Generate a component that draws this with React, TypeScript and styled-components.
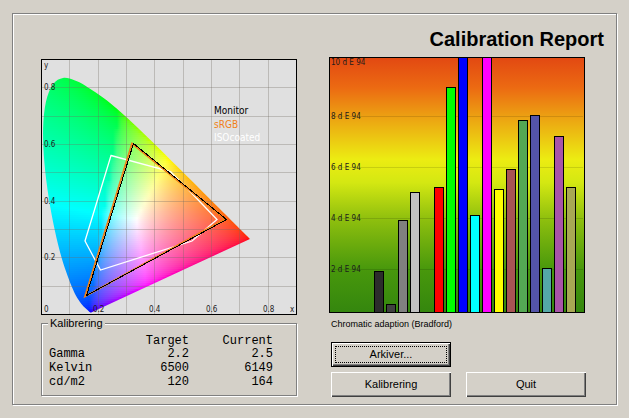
import React from "react";
import styled, { createGlobalStyle, css } from "styled-components";

const GlobalStyle = createGlobalStyle`
  * { box-sizing: border-box; }
  body {
    margin: 0;
    background: #d4d0c8;
    color: #000;
    font-family: "Liberation Sans", Arial, sans-serif;
    font-size: 11px;
  }
`;

const etched = css`
  border: 1px solid #808080;
  box-shadow: inset 1px 1px 0 #fff, 1px 1px 0 #fff;
`;

const Frame = styled.main`
  ${etched}
  margin: 13px 12px 12px;
  padding-bottom: 7px;
`;

const Title = styled.h1`
  margin: 0;
  padding: 13px 12px 6px;
  font-size: 20px;
  line-height: 24px;
  text-align: right;
`;

const Columns = styled.div`
  display: grid;
  grid-template-columns: minmax(0, 1fr) minmax(0, 1fr);
  align-items: start;
  gap: 32px;
  padding: 0 31px 0 28px;
`;

const Column = styled.section<{ $top?: number }>`
  display: flex;
  flex-direction: column;
  padding-top: ${(p) => p.$top ?? 0}px;
`;

const Plot = styled.svg`
  display: block;
  width: 100%;
  height: auto;
  font-family: "DejaVu Sans Condensed", "DejaVu Sans", sans-serif;
`;

const AxisText = styled.text`
  font-size: 8px;
  fill: #1c1c1c;
`;

const LegendText = styled.text`
  font-size: 10px;
`;

const Group = styled.fieldset`
  ${etched}
  min-width: 0;
  margin: 2px 0 0;
  padding: 6px 23px 6px 7px;
`;

const GroupName = styled.legend`
  margin-left: -1px;
  padding: 0 2px;
  background: #d4d0c8;
  line-height: 12px;
`;

const Values = styled.table`
  width: 100%;
  border-collapse: collapse;
  table-layout: fixed;
  font-family: "Liberation Mono", "Courier New", monospace;
  font-size: 12px;
  line-height: 14px;

  th, td {
    padding: 0;
    font-weight: normal;
    text-align: right;
  }
  thead th { line-height: 12px; }
  tbody th { text-align: left; }
  th:first-child { width: 56px; }
`;

const Note = styled.p`
  margin: 5px 2px 12px;
  font-size: 9px;
  line-height: 12px;
`;

const Buttons = styled.div`
  display: grid;
  grid-template-columns: 1fr 1fr;
  gap: 5px 15px;
  margin: 0 -1px 0 2px;
`;

const Button = styled.button<{ $isDefault?: boolean }>`
  height: 25px;
  padding: 0;
  border: 0;
  background: #d4d0c8;
  color: #000;
  font: inherit;
  line-height: 13px;
  box-shadow: inset 1px 1px 0 #fff, inset -1px -1px 0 #404040, inset -2px -2px 0 #808080;
  ${(p) =>
    p.$isDefault &&
    css`
      grid-column: 1;
      border: 1px solid #000;
      outline: 1px dotted #000;
      outline-offset: -5px;
    `}
  ${(p) => !p.$isDefault && css`grid-row: 2;`}
`;

/* CIE 1931 spectral locus, 380-700 nm */
const locus: [number, number][] = [
  [0.1741, 0.005], [0.1714, 0.0051], [0.1644, 0.0109], [0.1566, 0.0177],
  [0.144, 0.0297], [0.1241, 0.0578], [0.1096, 0.0868], [0.0913, 0.1327],
  [0.0687, 0.2007], [0.0454, 0.295], [0.0235, 0.4127], [0.0082, 0.5384],
  [0.0039, 0.6548], [0.0139, 0.7502], [0.0389, 0.812], [0.0743, 0.8338],
  [0.1142, 0.8262], [0.1547, 0.8059], [0.2296, 0.7543], [0.3016, 0.6923],
  [0.3731, 0.6245], [0.4441, 0.5547], [0.5125, 0.4866], [0.5752, 0.4242],
  [0.627, 0.3725], [0.6915, 0.3083], [0.7347, 0.2653],
];

const UNIT = 283;
const toX = (x: number) => 1 + x * UNIT;
const toY = (y: number) => 255 - y * UNIT;

/* Smooth closed outline: Catmull-Rom through the locus, closed by the purple line */
const locusPath = (() => {
  const p = locus.map(([x, y]) => [toX(x), toY(y)]);
  let d = `M${p[0][0]} ${p[0][1]}`;
  for (let i = 0; i < p.length - 1; i++) {
    const a = p[Math.max(i - 1, 0)];
    const b = p[i];
    const c = p[i + 1];
    const e = p[Math.min(i + 2, p.length - 1)];
    d += `C${b[0] + (c[0] - a[0]) / 6} ${b[1] + (c[1] - a[1]) / 6} ${c[0] - (e[0] - b[0]) / 6} ${c[1] - (e[1] - b[1]) / 6} ${c[0]} ${c[1]}`;
  }
  return d + "Z";
})();

/* Brightest CIE RGB colour of a chromaticity */
const colourAt = (px: number, py: number) => {
  const x = (px - 1) / UNIT;
  const y = (255 - py) / UNIT;
  const z = 1 - x - y;
  const rgb = [
    2.3707 * x - 0.9 * y - 0.4706 * z,
    -0.5139 * x + 1.4253 * y + 0.0886 * z,
    0.0053 * x - 0.0147 * y + 1.0094 * z,
  ].map((v) => Math.max(v, 0));
  const top = Math.max(...rgb);
  return `rgb(${rgb.map((v) => Math.round(255 * Math.pow(v / top, 1 / 2.2))).join(",")})`;
};

const ROW = 2;
const STEP = 4;
const rows = Array.from({ length: 120 }, (_, i) => 16 + i * ROW);
const stops = Array.from({ length: 54 }, (_, i) => i * STEP);
const SPAN = stops[stops.length - 1];

const grid = [28, 57, 85, 113, 142, 170, 198, 227];

const Gamut = () => (
  <Plot viewBox="0 0 256 256" role="img" aria-label="Chromaticity diagram">
    <defs>
      <clipPath id="locus">
        <path d={locusPath} />
      </clipPath>
      {rows.map((y) => (
        <linearGradient key={y} id={`row${y}`} gradientUnits="userSpaceOnUse" x1="0" y1="0" x2={SPAN} y2="0">
          {stops.map((x) => (
            <stop key={x} offset={x / SPAN} stopColor={colourAt(x, y + ROW / 2)} />
          ))}
        </linearGradient>
      ))}
    </defs>
    <rect width="256" height="256" fill="#e0e0e0" />
    <g clipPath="url(#locus)">
      {rows.map((y) => (
        <rect key={y} x="0" y={y} width={SPAN} height={ROW} fill={`url(#row${y})`} shapeRendering="crispEdges" />
      ))}
    </g>
    <g fill="#706a60" fillOpacity="0.32" shapeRendering="crispEdges">
      {grid.map((g) => (
        <rect key={`v${g}`} x={g} y="1" width="1" height="254" />
      ))}
      {grid.map((g) => (
        <rect key={`h${g}`} x="1" y={g} width="254" height="1" />
      ))}
    </g>
    <g fill="none">
      <path d="M70 96.500L129.500 112.500L149.500 133L176 160.500L151 182L59.500 211L44 182Z" stroke="#fff" strokeWidth="1.300" />
      <path d="M91 84.500L184 160L44 237.500Z" stroke="#f08018" strokeWidth="1.800" />
      <path d="M92.500 84.500L185.500 160.500L45.500 236.500Z" stroke="#000" strokeWidth="1" shapeRendering="crispEdges" />
    </g>
    <AxisText x="3" y="9">y</AxisText>
    <AxisText x="3" y="31">0.8</AxisText>
    <AxisText x="3" y="88">0.6</AxisText>
    <AxisText x="3" y="145">0.4</AxisText>
    <AxisText x="3" y="201">0.2</AxisText>
    <AxisText x="3" y="253">0</AxisText>
    <AxisText x="52" y="253">0.2</AxisText>
    <AxisText x="108" y="253">0.4</AxisText>
    <AxisText x="165" y="253">0.6</AxisText>
    <AxisText x="222" y="253">0.8</AxisText>
    <AxisText x="249" y="253">x</AxisText>
    <LegendText x="173" y="55" fill="#000">Monitor</LegendText>
    <LegendText x="173" y="69" fill="#f08018">sRGB</LegendText>
    <LegendText x="173" y="82" fill="#fff">ISOcoated</LegendText>
    <rect x="0.500" y="0.500" width="255" height="255" fill="none" stroke="#000" />
  </Plot>
);

const bars: [number, number, string][] = [
  [45, 214, "#2c2c2c"], [57, 247, "#404040"], [69, 163, "#808080"], [81, 135, "#c0c0c0"],
  [105, 130, "#ff0000"], [117, 30, "#00ff00"], [129, 0, "#0000ff"], [141, 158, "#00ffff"],
  [153, 0, "#ff00ff"], [165, 132, "#ffff00"], [177, 112, "#a85454"], [189, 63, "#54a854"],
  [201, 58, "#5454a8"], [213, 211, "#54a8a8"], [225, 79, "#a854a8"], [237, 130, "#a8a854"],
];

const levels: [number, number][] = [[8, 59], [6, 110], [4, 161], [2, 212]];

const DeltaChart = () => (
  <Plot viewBox="0 0 256 256" role="img" aria-label="Colour difference per patch">
    <defs>
      <linearGradient id="quality" x1="0" y1="0" x2="0" y2="1">
        <stop offset="0" stopColor="#e24812" />
        <stop offset="0.12" stopColor="#ec6a12" />
        <stop offset="0.24" stopColor="#eca412" />
        <stop offset="0.4" stopColor="#ecec12" />
        <stop offset="0.49" stopColor="#d4e812" />
        <stop offset="0.63" stopColor="#90c00e" />
        <stop offset="0.83" stopColor="#48980c" />
        <stop offset="1" stopColor="#34860e" />
      </linearGradient>
    </defs>
    <rect width="256" height="256" fill="url(#quality)" />
    <AxisText x="2" y="8">10 d E 94</AxisText>
    {levels.map(([n, y]) => (
      <React.Fragment key={n}>
        <rect x="2" y={y} width="252" height="1" fill="#000" fillOpacity="0.12" />
        <AxisText x="2" y={y + 3}>{n} d E 94</AxisText>
      </React.Fragment>
    ))}
    <g stroke="#000">
      {bars.map(([x, y, fill]) => (
        <rect key={x} x={x + 0.5} y={y + 0.5} width="9" height={255 - y} fill={fill} />
      ))}
      <rect x="0.500" y="0.500" width="255" height="255" fill="none" />
    </g>
  </Plot>
);

const readings = [
  ["Gamma", "2.2", "2.5"],
  ["Kelvin", "6500", "6149"],
  ["cd/m2", "120", "164"],
];

export default function App() {
  return (
    <>
      <GlobalStyle />
      <Frame>
        <Title>Calibration Report</Title>
        <Columns>
          <Column $top={2}>
            <Gamut />
            <Group>
              <GroupName>Kalibrering</GroupName>
              <Values>
                <thead>
                  <tr>
                    <th aria-label="Reading" />
                    <th scope="col">Target</th>
                    <th scope="col">Current</th>
                  </tr>
                </thead>
                <tbody>
                  {readings.map(([name, target, current]) => (
                    <tr key={name}>
                      <th scope="row">{name}</th>
                      <td>{target}</td>
                      <td>{current}</td>
                    </tr>
                  ))}
                </tbody>
              </Values>
            </Group>
          </Column>
          <Column>
            <DeltaChart />
            <Note>Chromatic adaption (Bradford)</Note>
            <Buttons>
              <Button type="button" $isDefault>Arkiver...</Button>
              <Button type="button">Kalibrering</Button>
              <Button type="button">Quit</Button>
            </Buttons>
          </Column>
        </Columns>
      </Frame>
    </>
  );
}
